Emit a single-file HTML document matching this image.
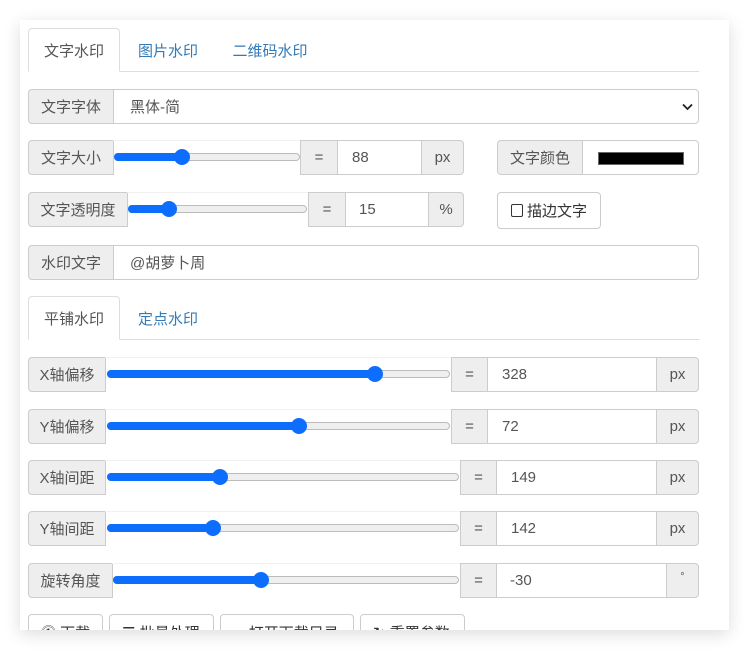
<!DOCTYPE html>
<html><head><meta charset="utf-8"><style>
*{box-sizing:border-box;margin:0;padding:0}
body{width:750px;height:652px;background:#fff;font-family:"Liberation Sans","Noto Sans CJK SC",sans-serif;font-size:15px;color:#333;position:relative;overflow:hidden}
.card{position:absolute;left:20px;top:20px;width:709px;height:610px;background:#fff;box-shadow:0 4px 16px rgba(0,0,0,.14);overflow:hidden}
.a{position:absolute;display:flex;align-items:center}
.lab{background:#eee;border:1px solid #ccc;justify-content:center;color:#555}
.inp{background:#fff;border:1px solid #ccc;padding-left:16px;color:#555}
.tab{position:absolute;height:44px;display:flex;align-items:center;justify-content:center;color:#337ab7}
.tab.act{border:1px solid #ddd;border-bottom:1px solid #fff;border-radius:4px 4px 0 0;color:#555;background:#fff}
.line{position:absolute;height:1px;background:#ddd}
.sl{position:absolute;border-top:1px solid #f2f2f2}
.tr{position:absolute;height:8px;border:1px solid #bbb;border-radius:4px;background:#efefef}
.fill{position:absolute;height:8px;border-radius:4px;background:#0d6efd}
.th{position:absolute;width:16px;height:16px;border-radius:50%;background:#0d6efd}
.btn{position:absolute;height:36px;border:1px solid #ccc;border-radius:4px;background:#fff;padding-left:12px;display:flex;align-items:center;color:#333}
</style></head><body>
<div class="card"></div>
<div class="line" style="left:28px;top:71px;width:671px"></div>
<div class="tab act" style="left:28px;top:28px;width:92px">文字水印</div>
<div class="tab" style="left:122px;top:28px;width:92px">图片水印</div>
<div class="tab" style="left:218px;top:28px;width:104px">二维码水印</div>

<div class="a lab" style="left:28px;top:89px;width:86px;height:35px;border-radius:4px 0 0 4px">文字字体</div>
<div class="a inp" style="left:113px;top:89px;width:586px;height:35px;border-radius:0 4px 4px 0">黑体-简<svg style="position:absolute;right:5px;top:13px" width="11" height="8" viewBox="0 0 11 8"><path d="M1 1.5l4.5 4.5 4.5-4.5" fill="none" stroke="#222" stroke-width="1.8"/></svg></div>

<div class="a lab" style="left:28px;top:140px;width:86px;height:35px;border-radius:4px 0 0 4px">文字大小</div>
<div class="sl" style="left:113px;top:140px;width:188px;height:35px"></div>
<div class="tr" style="left:114px;top:153px;width:186px"></div><div class="fill" style="left:114px;top:153px;width:68px"></div><div class="th" style="left:174px;top:149px"></div>
<div class="a lab" style="left:300px;top:140px;width:38px;height:35px;border-radius:0">=</div>
<div class="a inp" style="left:337px;top:140px;width:85px;height:35px;padding-left:14px">88</div>
<div class="a lab" style="left:421px;top:140px;width:43px;height:35px;border-radius:0 4px 4px 0">px</div>
<div class="a lab" style="left:497px;top:140px;width:86px;height:35px;border-radius:4px 0 0 4px">文字颜色</div>
<div class="a inp" style="left:582px;top:140px;width:117px;height:35px;border-radius:0 4px 4px 0"><div style="position:absolute;left:15px;top:11px;width:86px;height:13px;background:#000;border:1px solid #666"></div></div>

<div class="a lab" style="left:28px;top:192px;width:100px;height:35px;border-radius:4px 0 0 4px">文字透明度</div>
<div class="sl" style="left:127px;top:192px;width:182px;height:35px"></div>
<div class="tr" style="left:128px;top:205px;width:179px"></div><div class="fill" style="left:128px;top:205px;width:41px"></div><div class="th" style="left:161px;top:201px"></div>
<div class="a lab" style="left:308px;top:192px;width:38px;height:35px;border-radius:0">=</div>
<div class="a inp" style="left:345px;top:192px;width:84px;height:35px;padding-left:13px">15</div>
<div class="a lab" style="left:428px;top:192px;width:36px;height:35px;border-radius:0 4px 4px 0">%</div>
<div class="btn" style="left:497px;top:192px;width:104px;height:37px;padding-left:13px"><span style="display:inline-block;width:12px;height:13px;border:1px solid #333;border-radius:2px;margin-right:4px"></span>描边文字</div>

<div class="a lab" style="left:28px;top:245px;width:86px;height:35px;border-radius:4px 0 0 4px">水印文字</div>
<div class="a inp" style="left:113px;top:245px;width:586px;height:35px;border-radius:0 4px 4px 0">@胡萝卜周</div>

<div class="line" style="left:28px;top:339px;width:671px"></div>
<div class="tab act" style="left:28px;top:296px;width:92px">平铺水印</div>
<div class="tab" style="left:122px;top:296px;width:92px">定点水印</div>

<div class="a lab" style="left:28px;top:357px;width:78px;height:35px;border-radius:4px 0 0 4px">X轴偏移</div>
<div class="sl" style="left:105px;top:357px;width:347px;height:35px"></div>
<div class="tr" style="left:107px;top:370px;width:343px"></div><div class="fill" style="left:107px;top:370px;width:268px"></div><div class="th" style="left:367px;top:366px"></div>
<div class="a lab" style="left:451px;top:357px;width:37px;height:35px;border-radius:0">=</div>
<div class="a inp" style="left:487px;top:357px;width:170px;height:35px;padding-left:14px">328</div>
<div class="a lab" style="left:656px;top:357px;width:43px;height:35px;border-radius:0 4px 4px 0">px</div>

<div class="a lab" style="left:28px;top:409px;width:78px;height:35px;border-radius:4px 0 0 4px">Y轴偏移</div>
<div class="sl" style="left:105px;top:409px;width:347px;height:35px"></div>
<div class="tr" style="left:107px;top:422px;width:343px"></div><div class="fill" style="left:107px;top:422px;width:192px"></div><div class="th" style="left:291px;top:418px"></div>
<div class="a lab" style="left:451px;top:409px;width:37px;height:35px;border-radius:0">=</div>
<div class="a inp" style="left:487px;top:409px;width:170px;height:35px;padding-left:14px">72</div>
<div class="a lab" style="left:656px;top:409px;width:43px;height:35px;border-radius:0 4px 4px 0">px</div>

<div class="a lab" style="left:28px;top:460px;width:78px;height:35px;border-radius:4px 0 0 4px">X轴间距</div>
<div class="sl" style="left:105px;top:460px;width:356px;height:35px"></div>
<div class="tr" style="left:107px;top:473px;width:352px"></div><div class="fill" style="left:107px;top:473px;width:113px"></div><div class="th" style="left:212px;top:469px"></div>
<div class="a lab" style="left:460px;top:460px;width:37px;height:35px;border-radius:0">=</div>
<div class="a inp" style="left:496px;top:460px;width:161px;height:35px;padding-left:14px">149</div>
<div class="a lab" style="left:656px;top:460px;width:43px;height:35px;border-radius:0 4px 4px 0">px</div>

<div class="a lab" style="left:28px;top:511px;width:78px;height:35px;border-radius:4px 0 0 4px">Y轴间距</div>
<div class="sl" style="left:105px;top:511px;width:356px;height:35px"></div>
<div class="tr" style="left:107px;top:524px;width:352px"></div><div class="fill" style="left:107px;top:524px;width:106px"></div><div class="th" style="left:205px;top:520px"></div>
<div class="a lab" style="left:460px;top:511px;width:37px;height:35px;border-radius:0">=</div>
<div class="a inp" style="left:496px;top:511px;width:161px;height:35px;padding-left:14px">142</div>
<div class="a lab" style="left:656px;top:511px;width:43px;height:35px;border-radius:0 4px 4px 0">px</div>

<div class="a lab" style="left:28px;top:563px;width:85px;height:35px;border-radius:4px 0 0 4px">旋转角度</div>
<div class="sl" style="left:112px;top:563px;width:349px;height:35px"></div>
<div class="tr" style="left:113px;top:576px;width:346px"></div><div class="fill" style="left:113px;top:576px;width:148px"></div><div class="th" style="left:253px;top:572px"></div>
<div class="a lab" style="left:460px;top:563px;width:37px;height:35px;border-radius:0">=</div>
<div class="a inp" style="left:496px;top:563px;width:171px;height:35px;padding-left:13px">-30</div>
<div class="a lab" style="left:666px;top:563px;width:33px;height:35px;border-radius:0 4px 4px 0;font-size:11px;align-items:flex-start;padding-top:7px">°</div>

<div style="position:absolute;left:20px;top:600px;width:709px;height:30px;overflow:hidden">
<div class="btn" style="left:8px;top:14px;width:75px">⓵ 下载</div>
<div class="btn" style="left:89px;top:14px;width:105px">☰ 批量处理</div>
<div class="btn" style="left:200px;top:14px;width:134px">▰ 打开下载目录</div>
<div class="btn" style="left:340px;top:14px;width:105px">↻ 重置参数</div>
</div>
</body></html>
